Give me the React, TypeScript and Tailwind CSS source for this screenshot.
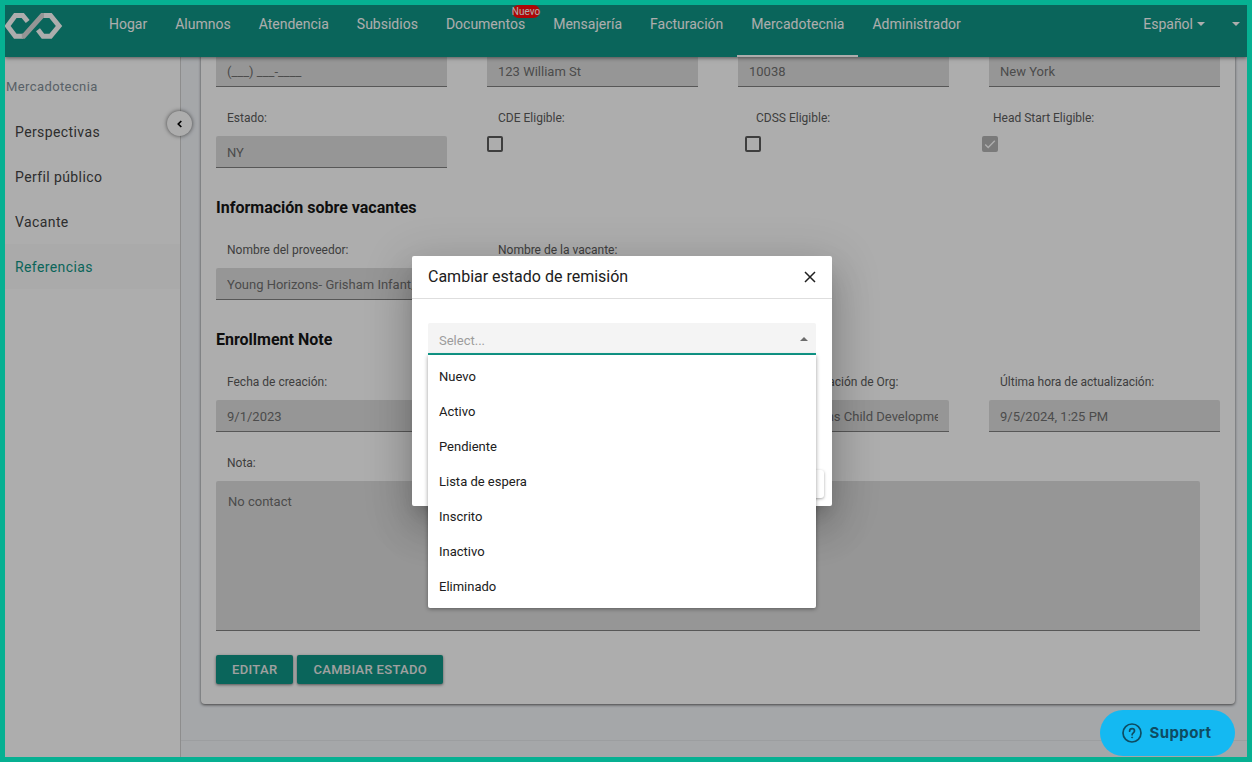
import { useId } from "react";
import type { ReactNode } from "react";

const NAV = [
  { name: "Hogar" },
  { name: "Alumnos" },
  { name: "Atendencia" },
  { name: "Subsidios" },
  { name: "Documentos", badge: "Nuevo" },
  { name: "Mensajería" },
  { name: "Facturación" },
  { name: "Mercadotecnia", active: true },
  { name: "Administrador" },
];

const SIDE = ["Perspectivas", "Perfil público", "Vacante", "Referencias"];

const STATES = ["Nuevo", "Activo", "Pendiente", "Lista de espera", "Inscrito", "Inactivo", "Eliminado"];

function Logo() {
  return (
    <svg width="58" height="28" viewBox="0 0 58 28" fill="none" stroke="#fff" strokeWidth="5" role="img" aria-label="Inicio">
      <path d="M22.7 9.5 17.7 3.5H10.3L2.5 14 10.3 24.3H18" />
      <path d="M33 17.8 38 24.3H45.5L54 14 45.5 3.5H37" />
      <path d="M16.8 24.3H18.6L37.2 3.5H39" stroke="#dcdcdc" />
    </svg>
  );
}

function Caret() {
  return (
    <svg width="8" height="4" viewBox="0 0 8 4" fill="currentColor" aria-hidden="true">
      <path d="M0 0h8L4 4z" />
    </svg>
  );
}

function Header() {
  return (
    <header className="relative z-10 flex h-[52px] shrink-0 items-stretch bg-[#109686] text-sm text-white shadow-[0_1px_4px_rgba(0,0,0,0.5)]">
      <a href="#" className="mr-8 mt-[7px] h-7 shrink-0">
        <Logo />
      </a>
      <nav className="flex grow">
        {NAV.map((n) => (
          <a
            key={n.name}
            href="#"
            className={
              "relative flex justify-center whitespace-nowrap border-b-2 px-[14px] pt-[9px] leading-5 " +
              (n.active ? "border-white" : "border-transparent")
            }
          >
            {n.name}
            {n.badge && (
              <span className="absolute -right-px top-0 flex h-[13px] items-center rounded-full bg-[#ff0a0a] text-[10px] leading-3">
                {n.badge}
              </span>
            )}
          </a>
        ))}
      </nav>
      <button className="flex h-[38px] items-center gap-1">
        Español
        <Caret />
      </button>
      <button className="ml-[27px] mr-[7px] flex h-[38px] items-center" aria-label="Cuenta">
        <Caret />
      </button>
    </header>
  );
}

function Sidebar() {
  return (
    <aside className="relative z-[5] w-44 shrink-0 border-r border-[#d0d0d0] bg-white pt-5 tracking-wide">
      <h2 className="px-px text-[13px] leading-5 text-[#848f98]">Mercadotecnia</h2>
      <ul className="mt-3">
        {SIDE.map((s) => (
          <li key={s}>
            <a
              href="#"
              className={
                "flex h-[45px] items-center px-[10px] text-sm " +
                (s === "Referencias" ? "bg-[#fbfbfb] text-[#109686]" : "text-[#444444]")
              }
            >
              {s}
            </a>
          </li>
        ))}
      </ul>
      <button
        aria-label="Contraer menú"
        className="absolute -right-3 top-[54px] flex size-[25px] items-center justify-center rounded-full bg-white text-black shadow-[0_0_4px_rgba(0,0,0,0.6)]"
      >
        <svg width="5" height="8" viewBox="0 0 5 8" fill="none" stroke="currentColor" strokeWidth="1.7" aria-hidden="true">
          <path d="M4.3 1 1.3 4l3 3" />
        </svg>
      </button>
    </aside>
  );
}

const LABEL = "mb-[7px] block h-[22px] truncate pl-[11px] text-xs leading-[22px] text-[#5c5c5c]";
const CELL = "min-w-0 px-5 first:pl-0 last:pr-0";
const INPUT =
  "block h-8 w-full rounded-t-[2px] border-b border-[#808080] bg-[#dedede] px-[11px] pt-px text-[13px] text-[#707070]";

function Field({ label, value }: { label: string; value: string }) {
  const id = useId();
  return (
    <div>
      <label htmlFor={id} className={LABEL}>
        {label}
      </label>
      <input id={id} disabled defaultValue={value} className={INPUT} />
    </div>
  );
}

function Check({ label, checked }: { label: string; checked?: boolean }) {
  const id = useId();
  return (
    <div className="relative">
      <label htmlFor={id} className={LABEL}>
        {label}
      </label>
      <input
        id={id}
        type="checkbox"
        defaultChecked={checked}
        disabled={checked}
        className="block size-4 appearance-none rounded-[2px] border-2 border-[#5c5c5c] checked:border-[#b4b4b4] checked:bg-[#b4b4b4]"
      />
      {checked && (
        <svg className="absolute left-0 top-[29px]" width="16" height="16" viewBox="0 0 16 16" fill="none" stroke="#fff" strokeWidth="1.4" aria-hidden="true">
          <path d="M3.2 8.4 6.2 11.4 12.8 4.8" />
        </svg>
      )}
    </div>
  );
}

function Heading({ children }: { children: ReactNode }) {
  return <h3 className="mb-[19px] mt-7 text-base font-bold leading-6 text-[#161616]">{children}</h3>;
}

function Action({ children }: { children: ReactNode }) {
  return (
    <button className="h-[29px] rounded-[2px] bg-[#109686] px-4 text-[13px] font-medium uppercase tracking-wide text-[#ececec] shadow-[0_1px_3px_rgba(0,0,0,0.5)]">
      {children}
    </button>
  );
}

function Details() {
  return (
    <div className="ml-5 mr-3 rounded-[4px] bg-white px-[15px] py-5 shadow-[0_1px_3px_rgba(0,0,0,0.6)]">
      <div className="grid grid-cols-4">
        <div className={CELL}>
          <input aria-label="Teléfono" disabled defaultValue="(___) ___-____" className={INPUT} />
        </div>
        <div className={CELL}>
          <input aria-label="Dirección" disabled defaultValue="123 William St" className={INPUT} />
        </div>
        <div className={CELL}>
          <input aria-label="Código postal" disabled defaultValue="10038" className={INPUT} />
        </div>
        <div className={CELL}>
          <input aria-label="Ciudad" disabled defaultValue="New York" className={INPUT} />
        </div>
      </div>
      <div className="mt-5 grid grid-cols-[251fr_258fr_237fr_258fr]">
        <div className={CELL}>
          <Field label="Estado:" value="NY" />
        </div>
        <div className={CELL}>
          <Check label="CDE Eligible:" />
        </div>
        <div className={CELL}>
          <Check label="CDSS Eligible:" />
        </div>
        <div className={CELL}>
          <Check label="Head Start Eligible:" checked />
        </div>
      </div>
      <Heading>Información sobre vacantes</Heading>
      <div className="grid grid-cols-4">
        <div className={CELL}>
          <Field label="Nombre del proveedor:" value="Young Horizons- Grisham Infant/Toddler" />
        </div>
        <div className="min-w-0 px-5">
          <Field label="Nombre de la vacante:" value="" />
        </div>
      </div>
      <Heading>Enrollment Note</Heading>
      <div className="grid grid-cols-4">
        <div className={CELL}>
          <Field label="Fecha de creación:" value="9/1/2023" />
        </div>
        <div className={CELL} />
        <div className={CELL}>
          <Field label="Última actualización de Org:" value="Young Horizons Child Development" />
        </div>
        <div className={CELL}>
          <Field label="Última hora de actualización:" value="9/5/2024, 1:25 PM" />
        </div>
      </div>
      <div className="mt-5 pr-5">
        <label htmlFor="nota" className={LABEL}>
          Nota:
        </label>
        <textarea
          id="nota"
          disabled
          defaultValue="No contact"
          className="block h-[150px] w-full resize-none rounded-t-[2px] border-b border-[#808080] bg-[#dedede] px-3 py-[11px] text-[13px] leading-5 text-[#707070]"
        />
      </div>
      <div className="mt-6 flex gap-1">
        <Action>Editar</Action>
        <Action>Cambiar estado</Action>
      </div>
    </div>
  );
}

function Dialog() {
  return (
    <div className="absolute inset-0 z-20 flex items-center justify-center bg-black/32 pr-2">
      <section
        role="dialog"
        aria-labelledby="dialog-title"
        className="flex h-[250px] w-[420px] flex-col rounded-[2px] bg-white shadow-[0_11px_15px_-7px_rgba(0,0,0,0.2),0_24px_38px_3px_rgba(0,0,0,0.14),0_9px_46px_8px_rgba(0,0,0,0.12)]"
      >
        <div className="flex h-[43px] items-center justify-between border-b border-[#dedede] px-4">
          <h2 id="dialog-title" className="text-base text-[#202020]">
            Cambiar estado de remisión
          </h2>
          <button aria-label="Cerrar" className="text-[#202020]">
            <svg width="12" height="12" viewBox="0 0 12 12" fill="none" stroke="currentColor" strokeWidth="1.5" aria-hidden="true">
              <path d="M1 1l10 10M11 1 1 11" />
            </svg>
          </button>
        </div>
        <div className="relative mx-4 mt-6">
          <input
            role="combobox"
            aria-label="Estado"
            aria-expanded="true"
            aria-controls="state-list"
            placeholder="Select..."
            className="block h-8 w-full rounded-t-[2px] border-b-2 border-[#109c8c] bg-[#f4f4f4] px-[11px] pt-1 text-[13px] text-[#202020] outline-none placeholder:text-[#9c9c9c]"
          />
          <svg className="absolute right-2 top-[14px]" width="8" height="4" viewBox="0 0 8 4" fill="#6c6c6c" aria-hidden="true">
            <path d="M0 4h8L4 0z" />
          </svg>
          <ul
            id="state-list"
            role="listbox"
            className="absolute inset-x-0 top-full z-10 rounded-b-[2px] bg-white py-1 shadow-[0_1px_4px_rgba(0,0,0,0.4)]"
          >
            {STATES.map((s) => (
              <li key={s} role="option" aria-selected="false" className="flex h-[35px] items-center px-[11px] text-[13px] text-[#202020]">
                {s}
              </li>
            ))}
          </ul>
        </div>
        <div className="mt-auto flex justify-end px-2 pb-2">
          <button aria-label="Guardar" className="h-[28px] w-20 rounded-[3px] bg-white shadow-[0_1px_3px_rgba(0,0,0,0.35)]" />
        </div>
      </section>
    </div>
  );
}

export default function App() {
  return (
    <div className="relative flex h-screen flex-col overflow-hidden border-[5px] border-[#06b092] bg-[#f3f6fa] font-['Roboto',sans-serif]">
      <Header />
      <div className="flex min-h-0 grow">
        <Sidebar />
        <main className="flex min-w-0 grow flex-col justify-end overflow-hidden">
          <Details />
          <footer className="mt-9 h-[17px] shrink-0 border-t border-[#e6e9ec]" />
        </main>
      </div>
      <Dialog />
      <button className="absolute bottom-px right-3 z-30 flex h-[46px] w-[135px] items-center justify-center gap-2 rounded-full bg-[#14b9f2] pr-[2px] font-['Inter',sans-serif] text-[15px] font-bold tracking-wide text-[#0e4c62]">
        <svg width="20" height="20" viewBox="0 0 20 20" fill="none" stroke="currentColor" strokeWidth="1.7" aria-hidden="true">
          <circle cx="10" cy="10" r="9" />
          <path d="M7.6 8.2C7.6 6.6 8.7 5.7 10.1 5.7S12.5 6.6 12.5 7.9C12.5 9.7 10.1 9.9 10.1 11.8" strokeLinecap="round" />
          <circle cx="10.1" cy="14.4" r=".5" fill="currentColor" strokeWidth="1" />
        </svg>
        Support
      </button>
    </div>
  );
}
